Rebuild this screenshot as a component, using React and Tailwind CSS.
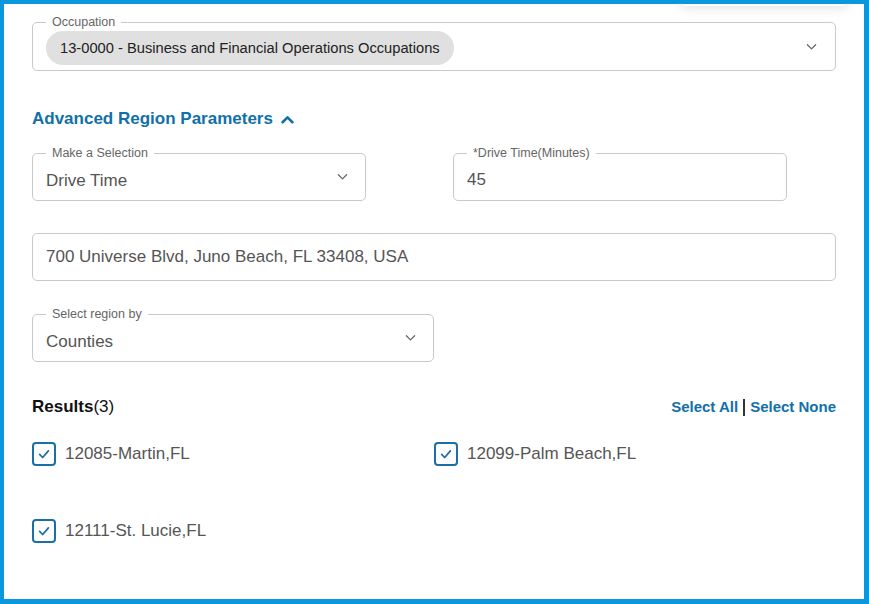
import React, { useState } from 'react';

const font = { fontFamily: '"Liberation Sans", Arial, sans-serif' };

function Chevron({ up = false, className = '' }) {
  return (
    <svg viewBox="0 0 12 8" className={className} fill="none" stroke="currentColor" strokeLinecap="round" strokeLinejoin="round">
      {up ? <path d="M1.5 6.5 6 2l4.5 4.5" /> : <path d="M1.5 1.5 6 6l4.5-4.5" />}
    </svg>
  );
}

function Outlined({ label, className = '', children }) {
  return (
    <div className={`relative border border-[#c9c9c9] rounded-[5px] flex items-center pl-[13px] pr-[17px] ${className}`}>
      {label && (
        <span className="absolute -top-[8px] left-[13px] px-[6px] bg-white text-[12.5px] leading-[14px] text-[#666]">
          {label}
        </span>
      )}
      {children}
    </div>
  );
}

function Check({ label, checked, onToggle }) {
  return (
    <label className="h-[24px] flex items-center gap-[9px] cursor-pointer">
      <span
        onClick={onToggle}
        className="w-[24px] h-[24px] border-2 border-[#1a6fa8] rounded-[4px] flex items-center justify-center"
      >
        {checked && (
          <svg viewBox="0 0 16 16" className="w-[14px] h-[14px]" fill="none" stroke="#1a6fa8" strokeWidth="2" strokeLinecap="round" strokeLinejoin="round">
            <path d="M3 8.5 6.5 12 13 4.5" />
          </svg>
        )}
      </span>
      <span className="text-[17px] leading-[20px] text-[#555]">{label}</span>
    </label>
  );
}

export default function App() {
  const [results, setResults] = useState([
    { id: '12085', name: '12085-Martin,FL', checked: true },
    { id: '12099', name: '12099-Palm Beach,FL', checked: true },
    { id: '12111', name: '12111-St. Lucie,FL', checked: true },
  ]);

  const setAll = (v) => setResults(results.map((r) => ({ ...r, checked: v })));

  return (
    <div style={font} className="relative w-[869px] h-[604px] bg-white border-[#0a97dd] border-t-4 border-l-4 border-r-[5px] border-b-[5px] overflow-hidden">
      {/* leftover menu shadow */}
      <div className="absolute -top-[14px] left-[675px] w-[170px] h-[16px] bg-white shadow-[0_3px_10px_rgba(0,0,0,0.10)] rounded-lg" />

      <div className="relative pt-[18px] pl-[28px] pr-[28px] flex flex-col">
        {/* Occupation */}
        <Outlined label="Occupation" className="h-[49px] pr-[18px]">
          <span className="mt-[3px] h-[34px] px-[14px] rounded-full bg-[#e0e0e0] flex items-center text-[14.7px] text-[#222]">
            13-0000 - Business and Financial Operations Occupations
          </span>
          <Chevron className="ml-auto w-[11px] h-[8px] text-[#666] stroke-[1.4]" />
        </Outlined>

        {/* Advanced heading */}
        <button className="mt-[38px] flex items-center gap-[8px] text-[#1170aa] text-[17px] font-bold leading-[20px] self-start">
          Advanced Region Parameters
          <Chevron up className="w-[13px] h-[9px] stroke-[2.4]" />
        </button>

        <div className="mt-[24px] grid grid-cols-2">
          <Outlined label="Make a Selection" className="w-[334px] h-[48px]">
            <span className="pt-[7px] text-[17px] text-[#555]">Drive Time</span>
            <Chevron className="ml-auto w-[11px] h-[8px] text-[#666] stroke-[1.4]" />
          </Outlined>
          <div className="pl-[19px]">
            <Outlined label="*Drive Time(Minutes)" className="w-[334px] h-[48px]">
              <span className="pt-[5px] text-[17px] text-[#555]">45</span>
            </Outlined>
          </div>
        </div>

        <Outlined className="mt-[32px] h-[48px]">
          <span className="text-[17px] text-[#555]">700 Universe Blvd, Juno Beach, FL 33408, USA</span>
        </Outlined>

        <Outlined label="Select region by" className="mt-[33px] w-[402px] h-[48px]">
          <span className="pt-[7px] text-[17px] text-[#555]">Counties</span>
          <Chevron className="ml-auto w-[11px] h-[8px] text-[#666] stroke-[1.4]" />
        </Outlined>

        {/* Results */}
        <div className="mt-[35px] h-[20px] flex items-center justify-between leading-[20px]">
          <div className="text-[17px] text-[#111]">
            <span className="font-bold">Results</span>(3)
          </div>
          <div className="flex items-center gap-[5px] text-[15px] font-bold text-[#1170aa]">
            <button onClick={() => setAll(true)}>Select All</button>
            <span className="w-[2px] h-[17px] bg-[#333]" />
            <button onClick={() => setAll(false)}>Select None</button>
          </div>
        </div>

        <div className="mt-[25px] grid grid-cols-2 gap-y-[53px]">
          {results.map((r) => (
            <Check
              key={r.id}
              label={r.name}
              checked={r.checked}
              onToggle={() => setResults(results.map((x) => (x.id === r.id ? { ...x, checked: !x.checked } : x)))}
            />
          ))}
        </div>
      </div>
    </div>
  );
}
